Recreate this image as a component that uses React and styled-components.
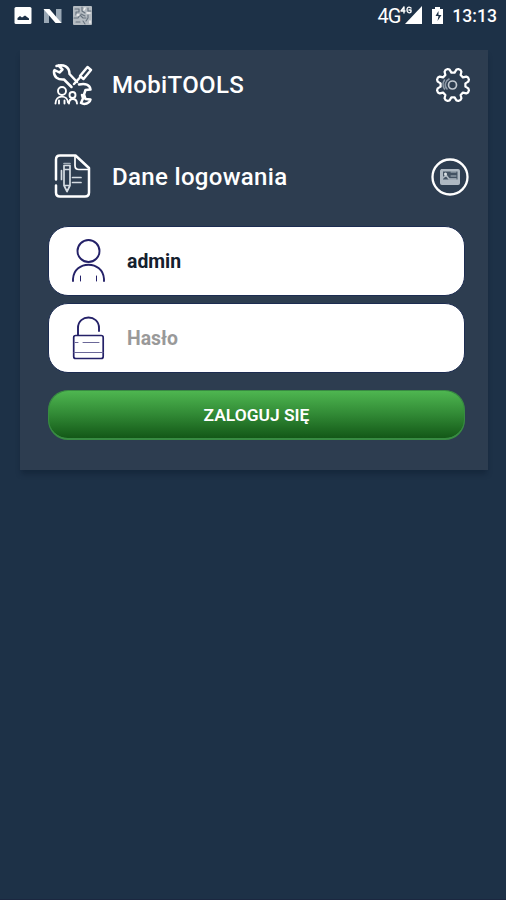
import React from "react";
import styled, { createGlobalStyle } from "styled-components";

const GlobalStyle = createGlobalStyle`
  * { box-sizing: border-box; }
  html, body { margin: 0; padding: 0; background: #1d3147; }
  body { font-family: Roboto, "Liberation Sans", sans-serif; }
`;

const Screen = styled.div`
  width: 506px;
  height: 900px;
  overflow: hidden;
  background: #1d3147;
  border-bottom: 1px solid #1b2740;
`;

const StatusBar = styled.header`
  height: 50px;
  display: flex;
  justify-content: space-between;
  align-items: flex-start;
  padding: 5px 9px 0 14px;
  color: #fff;
`;

const StatusGroup = styled.div`
  display: flex;
  align-items: center;
  height: 22px;
`;

const Network = styled.span`
  font-size: 20px;
  letter-spacing: -1px;
  line-height: 22px;
`;

const Clock = styled.time`
  font-size: 17.600px;
  font-weight: 500;
  line-height: 22px;
  margin-left: 6px;
`;

const Card = styled.main`
  width: 468px;
  height: 420px;
  margin-left: 20px;
  padding: 0 17px 0 28px;
  background: #2d3d50;
  box-shadow: 0 5px 5px -1px rgba(10, 25, 42, 0.4);
`;

const TitleRow = styled.div`
  display: flex;
  align-items: center;
  height: ${(p) => p.$height}px;
  padding-top: ${(p) => p.$top}px;
  padding-right: ${(p) => p.$end || 0}px;
`;

const Title = styled.h1`
  flex: 1;
  margin: 0 0 0 16px;
  color: #fff;
  font-size: 24px;
  font-weight: 500;
  line-height: 32px;
  letter-spacing: 0.33px;
  white-space: nowrap;
`;

const Field = styled.label`
  display: flex;
  align-items: center;
  width: 417px;
  height: 70px;
  margin-bottom: 7px;
  padding-left: 20px;
  border: 1px solid #1c2c51;
  border-radius: 20px;
  background: #fff;
`;

const Input = styled.input`
  width: 300px;
  margin: 0 0 0 20px;
  padding: 0;
  border: 0;
  outline: 0;
  background: transparent;
  color: #14202e;
  font: 700 19.400px Roboto, "Liberation Sans", sans-serif;
  &::placeholder { color: #999; opacity: 1; }
`;

const Submit = styled.button`
  display: block;
  width: 417px;
  height: 50px;
  margin-top: 17px;
  padding: 0;
  border: 1px solid #388b42;
  border-bottom-width: 2px;
  border-radius: 20px;
  background: linear-gradient(#4eb650 0%, #328b36 48%, #135817 100%) padding-box, #388b42;
  color: #fff;
  font: 600 17.400px Roboto, "Liberation Sans", sans-serif;
`;

const Icon = styled.svg`
  display: block;
  flex: none;
  fill: none;
  stroke-linecap: round;
  stroke-linejoin: round;
`;

const StatusIcons = () => (
  <Icon width="80" height="22" viewBox="14 5 80 22">
    <rect x="14.500" y="7" width="17" height="17" rx="1.500" fill="#fff" />
    <path d="M17.500 20v-2l2.500-2 2 1.500 3-2 4 3v1.500z" fill="#1d3147" />
    <path d="M44 23V9h5v14zM56 9h5.500v14H56z" fill="#9aa8b5" />
    <path d="M43.500 9h6l12 14h-6z" fill="#fff" />
    <rect x="73" y="6" width="19" height="19" rx="1" fill="#b4bbc1" />
    <path d="M75 9h4v3h-3v3M82 7v4l3 2M88 8v3h3M74 18h4l2-3 3 3h3M76 22h4M83 21l2 3M88 15v3l-2 3M81 14l4 2" stroke="#66727e" strokeWidth="1.100" />
    <path d="M77 15h2M85 8l-1 2M90 21v2M87 13h3" stroke="#f2f2f2" strokeWidth="1.500" />
  </Icon>
);

const SignalIcon = () => (
  <Icon width="46" height="22" viewBox="400 5 46 22">
    <path d="M405 24L422 6v18z" fill="#fff" />
    <path d="M404 7l-3 4h4M404 7v6M411 8c-3-2-4 0-4 2s2 4 4 2v-2h-2" stroke="#fff" strokeWidth="1.400" />
    <path d="M432 9h3V7h5v2h3v15h-11z" fill="#fff" />
    <path d="M438.500 11l-3 5h3l-1 5 4-6h-3z" fill="#1d3147" />
  </Icon>
);

const ToolsIcon = () => (
  <Icon width="48" height="48" viewBox="48 60.500 48 48" stroke="#fff" strokeWidth="2.500">
    <path d="M56.500 65.500c7-2.500 13 1 13 8l7.500 8M54.500 69.500l5 2.500 3-3-4-4M54 70.500c-.5 6 4 9 10 8.500l7.500 7.500" />
    <path d="M80 75.500l7.500-9 3.500 3-7.500 9zM79.500 77.500l-5.500 6" />
    <path d="M79 84c6-1.500 11 0 11.500 5l-5 .5-1.500 4.500 1.500 4.500 5 .5c-1 4-6 5.500-9.500 3.500l2-4.500-1-3.500" />
    <g strokeWidth="1.900">
      <circle cx="62" cy="90.500" r="4" />
      <circle cx="72.500" cy="94.500" r="3" />
      <path d="M55.500 103c0-9 12-9 12.500-1M59 100v3M64.500 100v3M69 103c0-6 7.500-6 8 0" />
    </g>
  </Icon>
);

const gearPath = Array.from({ length: 8 }, (_, tooth) => {
  const middle = 22.5 + tooth * 45;
  return [[-15, 12.5], [-10, 15.7], [-4, 16.8], [4, 16.8], [10, 15.7], [15, 12.5]]
    .map(([offset, radius]) => {
      const angle = ((middle + offset) * Math.PI) / 180;
      return `${18 + radius * Math.cos(angle)},${18 + radius * Math.sin(angle)}`;
    }).join(" L");
}).join(" L");

const GearIcon = () => (
  <Icon width="36" height="36" viewBox="0 0 36 36" stroke="#fff" strokeWidth="2.200">
    <path d={`M${gearPath}Z`} />
    <circle cx="17.500" cy="18" r="4" stroke="#c2c9d1" strokeWidth="1.700" />
    <path d="M14 12c-4 2-5 7-2 10M9.500 13c-2 3-2 6 0 9" stroke="#8e9aa7" strokeWidth="1.600" />
  </Icon>
);

const DocumentIcon = () => (
  <Icon width="48" height="48" viewBox="48 152.500 48 48" stroke="#fff" strokeWidth="2.500">
    <path d="M56 179v-20q0-4 4-4h15.500L89 167.500v24.500q0 4-4 4H60q-4 0-4-4v-7" />
    <path d="M75 156v9q0 4 4 4h9" strokeWidth="1.700" />
    <g stroke="#d5dce2" strokeWidth="1.700">
      <path d="M64 165h6v20l-3 6-3-6zM64 169h6M64 185h6M61.500 170v9M72.500 177h8.500M72.500 182h8.500" />
      <path d="M64 163h6" stroke="#9fabb6" />
    </g>
  </Icon>
);

const CardIcon = () => (
  <Icon width="38" height="38" viewBox="0 0 38 38">
    <circle cx="19" cy="19" r="17.500" stroke="#fff" strokeWidth="2.300" />
    <rect x="9.500" y="11.500" width="19" height="15" rx="1" fill="#aeb8c2" stroke="#aeb8c2" />
    <rect x="12" y="13.500" width="14.500" height="8" fill="#435263" />
    <path d="M12 20l3-3 3 4h7" stroke="#aeb8c2" strokeWidth="1.500" />
    <circle cx="14.500" cy="16" r="1.500" fill="#dbe0e4" />
    <path d="M20 14h5M20 18h5" stroke="#aeb8c2" />
  </Icon>
);

const UserIcon = () => (
  <Icon width="38" height="48" viewBox="69 237 38 48" stroke="#242168">
    <circle cx="88.500" cy="251" r="11" strokeWidth="1.900" />
    <path d="M73 281v-2c1-19 30-19 31 0v2" strokeWidth="1.900" />
    <path d="M80.500 276v5M96.500 276v5" strokeWidth="1" />
  </Icon>
);

const LockIcon = () => (
  <Icon width="38" height="48" viewBox="69 314 38 48" stroke="#242168">
    <path d="M78 335v-7c0-14 21-14 21 0v3" strokeWidth="1.900" />
    <rect x="73.700" y="335.500" width="29.500" height="23" rx="2" strokeWidth="1.700" />
    <path d="M75 342.500h3M83 342.500h16M74 352.500h29" strokeWidth="1" stroke="#6b6898" />
  </Icon>
);

export default function App() {
  return (
    <>
      <GlobalStyle />
      <Screen>
        <StatusBar>
          <StatusIcons />
          <StatusGroup>
            <Network>4G</Network>
            <SignalIcon />
            <Clock>13:13</Clock>
          </StatusGroup>
        </StatusBar>
        <Card>
          <TitleRow $height={69} $top={0}>
            <ToolsIcon />
            <Title>MobiTOOLS</Title>
            <GearIcon />
          </TitleRow>
          <TitleRow $height={107} $top={9} $end={2}>
            <DocumentIcon />
            <Title>Dane logowania</Title>
            <CardIcon />
          </TitleRow>
          <Field>
            <UserIcon />
            <Input defaultValue="admin" aria-label="Login" />
          </Field>
          <Field>
            <LockIcon />
            <Input type="password" placeholder="Hasło" aria-label="Hasło" />
          </Field>
          <Submit>ZALOGUJ SIĘ</Submit>
        </Card>
      </Screen>
    </>
  );
}
